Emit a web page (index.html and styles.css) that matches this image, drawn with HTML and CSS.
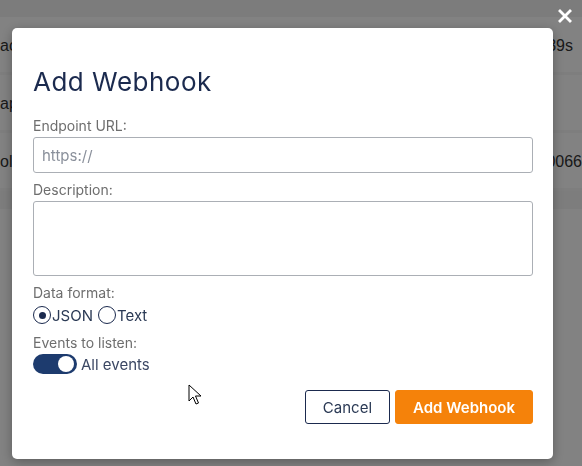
FILE: index.html
```html
<!DOCTYPE html>
<html lang="en">
<head>
    <meta charset="UTF-8">
    <meta name="viewport" content="width=device-width, initial-scale=1.0">
    <title>Add Webhook</title>
    <link rel="stylesheet" href="styles.css">
</head>
<body>
    <div class="page">
        <div class="page-top"></div>
        <div class="table-row">
            <span class="cell-left">ac webhook-delivery</span>
            <span class="cell-right">1m 39s</span>
        </div>
        <div class="table-row">
            <span class="cell-left">ap</span>
            <span class="cell-right"></span>
        </div>
        <div class="table-row">
            <span class="cell-left">ol</span>
            <span class="cell-right flush">0.0066</span>
        </div>
        <div class="page-bottom"></div>
    </div>

    <div class="overlay">
        <button class="close-btn" aria-label="Close">
            <svg width="14" height="14" viewBox="0 0 14 14">
                <path d="M2 2 L12 12 M12 2 L2 12" stroke="#fff" stroke-width="2.8" stroke-linecap="square"/>
            </svg>
        </button>

        <div class="modal">
            <h1 class="modal-title">Add Webhook</h1>

            <div class="field">
                <label class="field-label" for="endpointUrl">Endpoint URL:</label>
                <input id="endpointUrl" class="input-field" type="text" placeholder="https://">
            </div>

            <div class="field">
                <label class="field-label" for="description">Description:</label>
                <textarea id="description" class="textarea-field"></textarea>
            </div>

            <div class="field">
                <div class="field-label">Data format:</div>
                <div class="radio-group">
                    <label class="radio-option">
                        <input type="radio" name="format" class="radio" checked>
                        <span>JSON</span>
                    </label>
                    <label class="radio-option">
                        <input type="radio" name="format" class="radio">
                        <span>Text</span>
                    </label>
                </div>
            </div>

            <div class="field">
                <div class="field-label">Events to listen:</div>
                <label class="toggle-option">
                    <span class="toggle on"><span class="toggle-knob"></span></span>
                    <span>All events</span>
                </label>
            </div>

            <div class="modal-actions">
                <button class="btn-cancel">Cancel</button>
                <button class="btn-add">Add Webhook</button>
            </div>
        </div>

        <svg class="cursor" width="14" height="22" viewBox="0 0 14 22">
            <path d="M1 1 L1 17 L5 13 L8 20 L10.5 19 L7.5 12 L13 12 Z" fill="#fff" stroke="#000" stroke-width="1" stroke-linejoin="round"/>
        </svg>
    </div>
</body>
</html>
```

FILE: styles.css
```css
* {
    margin: 0;
    padding: 0;
    box-sizing: border-box;
}

body {
    width: 582px;
    height: 466px;
    overflow: hidden;
    font-family: Inter, 'Liberation Sans', sans-serif;
    background: #fff;
}

/* page behind the dialog */
.page {
    font-family: 'Liberation Sans', Arial, sans-serif;
    font-size: 16px;
    color: #333;
}

.page-top {
    height: 17px;
    background: #f4f4f4;
}

.table-row {
    height: 58px;
    display: flex;
    justify-content: space-between;
    align-items: center;
    background: #fff;
    border-bottom: 3px solid #f8f8f8;
    padding-top: 2px;
    white-space: nowrap;
}

.cell-right {
    padding-right: 9px;
}

.cell-right.flush {
    padding-right: 0;
}

.page-bottom {
    height: 18px;
    background: #f6f6f6;
}

/* dialog */
.overlay {
    position: fixed;
    inset: 0;
    background: rgba(0, 0, 0, 0.49);
}

.close-btn {
    position: absolute;
    top: 9px;
    right: 10px;
    width: 14px;
    height: 14px;
    border: none;
    background: none;
    cursor: pointer;
    display: flex;
}

.modal {
    width: 541px;
    height: 431px;
    margin: 28px 0 0 12px;
    padding: 38px 20px 35px 21px;
    background: white;
    border-radius: 5px;
    box-shadow: 0 3px 12px rgba(0, 0, 0, 0.3);
    display: flex;
    flex-direction: column;
}

.modal-title {
    font-size: 26px;
    line-height: 32px;
    font-weight: 400;
    letter-spacing: 0.5px;
    color: #1b2a4e;
    margin-bottom: 19px;
}

.field {
    margin-bottom: 8px;
}

.field-label {
    display: block;
    font-size: 14px;
    line-height: 17px;
    color: #6e6e6e;
    margin-bottom: 3px;
}

.input-field,
.textarea-field {
    display: block;
    width: 100%;
    border: 1px solid #abafb5;
    border-radius: 3px;
    font-family: inherit;
    font-size: 15px;
    color: #333;
    padding: 0 8px;
    background: white;
}

.input-field {
    height: 36px;
}

.input-field::placeholder {
    color: #8a909b;
}

.textarea-field {
    height: 75px;
    resize: none;
    padding-top: 8px;
}

.radio-group {
    display: flex;
    gap: 5px;
    height: 22px;
    align-items: center;
}

.radio-option {
    display: flex;
    align-items: center;
    gap: 1px;
    font-size: 15px;
    color: #2b3a55;
    cursor: pointer;
}

.radio {
    appearance: none;
    width: 18px;
    height: 18px;
    border: 1.5px solid #1b2a4e;
    border-radius: 50%;
    display: grid;
    place-items: center;
}

.radio:checked::after {
    content: "";
    width: 7px;
    height: 7px;
    border-radius: 50%;
    background: #1b2a4e;
}

.toggle-option {
    display: flex;
    align-items: center;
    gap: 4px;
    font-size: 15px;
    color: #3b4763;
}

.toggle {
    width: 44px;
    height: 20px;
    border-radius: 10px;
    background: #c7ccd4;
    display: flex;
    align-items: center;
    padding: 0 3px;
}

.toggle.on {
    background: #1d3b6e;
    justify-content: flex-end;
}

.toggle-knob {
    width: 16px;
    height: 16px;
    border-radius: 50%;
    background: white;
}

.modal-actions {
    margin-top: auto;
    display: flex;
    justify-content: flex-end;
    gap: 5px;
}

.btn-cancel,
.btn-add {
    height: 34px;
    padding: 0 17px;
    border-radius: 3px;
    font-family: inherit;
    font-size: 15px;
    cursor: pointer;
}

.btn-cancel {
    background: white;
    border: 1px solid #1b2a4e;
    color: #2b3a55;
}

.btn-add {
    background: #f5820a;
    border: 1px solid #f5820a;
    color: white;
    font-weight: 600;
}

.cursor {
    position: absolute;
    left: 188px;
    top: 384px;
}
```
